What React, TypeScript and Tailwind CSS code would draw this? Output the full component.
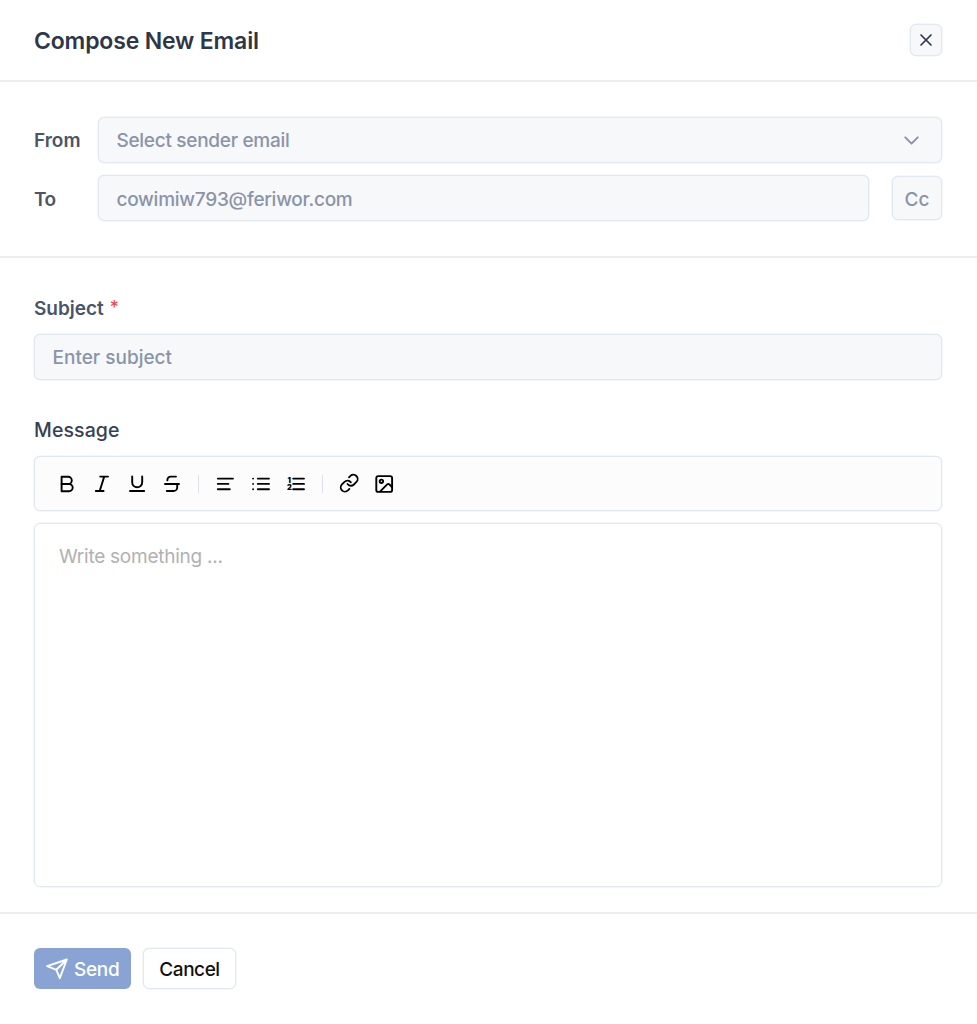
import type { ReactNode } from 'react';
import { ChevronDown, Link, X } from 'lucide-react';

interface ToolProps {
  label: string;
  children: ReactNode;
}

function Tool({ label, children }: ToolProps) {
  return (
    <button type="button" aria-label={label} className="flex h-8 w-[35.2px] shrink-0 items-center justify-center">
      {children}
    </button>
  );
}

function Glyph({ children }: { children: ReactNode }) {
  return (
    <svg width="24" height="24" viewBox="0 0 24 24" fill="none" stroke="currentColor" strokeWidth="1.9" strokeLinecap="round" strokeLinejoin="round">
      {children}
    </svg>
  );
}

function Separator() {
  return <div className="mx-[8.5px] h-[18px] w-px shrink-0 bg-[#dfe2ec]" />;
}

function Toolbar() {
  return (
    <div className="flex h-[55px] items-center rounded-md border border-[#e2e8f0] bg-[#fcfcfc] pl-[14px] text-black shadow-[0_0_0_0.5px_#e9eef4]">
      <Tool label="Bold">
        <Glyph><path d="M6.6 4.8h6.6a3.6 3.6 0 0 1 0 7.2H6.3M6.3 12h7.8a3.6 3.6 0 0 1 0 7.2H6.6V4.8" /></Glyph>
      </Tool>
      <Tool label="Italic">
        <Glyph><path d="M10.2 4.6h7.8M5.8 19h7.8M14.2 4.6 9.7 19" /></Glyph>
      </Tool>
      <Tool label="Underline">
        <Glyph><path d="M7.2 4.4v5.9a5 5 0 0 0 10 0V4.4M5 19h14.2" /></Glyph>
      </Tool>
      <Tool label="Strikethrough">
        <Glyph><path d="M16 4.6h-5.2a3.4 3.4 0 0 0-3.4 3.7M5 12h14M17.2 12.2v3.2a3.6 3.6 0 0 1-3.6 3.6H6.8" /></Glyph>
      </Tool>
      <Separator />
      <Tool label="Align">
        <Glyph><path d="M4.8 6.6h15.2M4.8 11.9h10.6M4.8 17.2h12" /></Glyph>
      </Tool>
      <Tool label="Bullet list">
        <Glyph><path d="M8.8 6.6h11.2M8.8 11.9h11.2M8.8 17.2h11.2M4.1 6.6h.01M4.1 11.9h.01M4.1 17.2h.01" /></Glyph>
      </Tool>
      <Tool label="Numbered list">
        <Glyph>
          <path d="M9.2 6.6h10.8M9.2 11.9h10.8M9.2 17.2h10.8" />
          <text x="3.4" y="11" className="fill-black font-['Inter'] text-[7.5px] font-black" stroke="none">1</text>
          <text x="2.9" y="18.4" className="fill-black font-['Inter'] text-[7.5px] font-black" stroke="none">2</text>
        </Glyph>
      </Tool>
      <Separator />
      <Tool label="Link"><Link size={20.4} strokeWidth={2.1} /></Tool>
      <Tool label="Image">
        <Glyph>
          <rect x="4.3" y="4.1" width="15.8" height="15.8" rx="2" />
          <circle cx="9.4" cy="9.3" r="1.7" />
          <path d="m8 19.6 7.2-7.2a1.6 1.6 0 0 1 2.2 0l2.5 2.6" />
        </Glyph>
      </Tool>
    </div>
  );
}

export default function App() {
  return (
    <div className="flex h-[1024px] w-[977px] flex-col bg-white font-['Inter',sans-serif] text-[19px] leading-6 text-[#4a5568]">
      <header className="flex h-[82px] items-center justify-between border-b-2 border-[#e9eef3] pr-[35px] pl-[34px]">
        <h1 className="pt-[2px] text-[23px] font-semibold tracking-[-0.17px] text-[#2d3748]">Compose New Email</h1>
        <button type="button" aria-label="Close" className="flex size-8 items-center justify-center rounded-md border border-[#e2e8f0] bg-[#f7f8fa] text-[#2d3748] shadow-[0_0_0_0.5px_#e9eef4]">
          <X size={20} strokeWidth={2} />
        </button>
      </header>

      <section className="flex h-[176px] flex-col gap-3 border-b-2 border-[#e9eef3] pt-[35px] pr-[35px] pl-[34px]">
        <div className="flex items-center">
          <label className="w-16 pt-[2px] font-semibold">From</label>
          <div className="flex h-[46px] flex-1 items-center justify-between rounded-md border border-[#e2e8f0] bg-[#f7f8fa] pr-[17px] pl-[17.5px] text-[#8a94a9] shadow-[0_0_0_0.5px_#e9eef4]">
            <span className="pt-[2px] font-[450] tracking-[-0.29px]">Select sender email</span>
            <ChevronDown size={25} strokeWidth={1.9} />
          </div>
        </div>
        <div className="flex items-center">
          <label className="w-16 pt-[3px] font-semibold tracking-[-0.5px]">To</label>
          <div className="flex h-[46px] flex-1 items-center rounded-md border border-[#e2e8f0] bg-[#f7f8fa] pl-[17.5px] text-[#8a94a9] shadow-[0_0_0_0.5px_#e9eef4]">
            <span className="pt-[3px] font-[450] tracking-[-0.26px]">cowimiw793@feriwor.com</span>
          </div>
          <button type="button" className="ml-[23px] h-11 w-[50px] rounded-md border border-[#e2e8f0] bg-[#f7f8fa] pt-[3px] font-[450] text-[#8a94a9] shadow-[0_0_0_0.5px_#e9eef4]">Cc</button>
        </div>
      </section>

      <main className="flex h-[656px] flex-col border-b-2 border-[#e9eef3] pt-[39px] pr-[35px] pl-[34px]">
        <label className="flex h-6 font-semibold">Subject <span className="ml-[6px] -translate-y-px text-[18px] font-normal text-[#f04444]">*</span></label>
        <div className="mt-[13px] flex h-[46px] items-center rounded-md border border-[#e2e8f0] bg-[#f7f8fa] pl-[17.5px] text-[#8a94a9] shadow-[0_0_0_0.5px_#e9eef4]">
          <span className="pt-[2px] font-[450]">Enter subject</span>
        </div>
        <label className="mt-[38px] mb-[14px] text-[19.5px] font-medium tracking-[0.1px] text-[#374151]">Message</label>
        <Toolbar />
        <div className="mt-3 h-[364px] rounded-md border border-[#e2e8f0] pt-[21px] pl-6 tracking-[-0.25px] text-[#b1b1b1] shadow-[0_0_0_0.5px_#e9eef4]">Write something ...</div>
      </main>

      <footer className="flex gap-3 pt-[34px] pl-[34px]">
        <button type="button" className="flex h-[41px] w-[97px] items-center rounded-md bg-[#88a3d4] pl-3 text-white">
          <svg width="22" height="22" viewBox="0 0 22 22" fill="none" stroke="currentColor" strokeWidth="1.9" strokeLinejoin="round">
            <path d="M20.8 1.5 1.2 8.2l9.1 3.6 3.5 8.4zM20.8 1.5 10.3 11.8" />
          </svg>
          <span className="ml-[6px] pt-[2px] font-[450] tracking-[-0.3px]">Send</span>
        </button>
        <button type="button" className="h-[41px] w-[93px] rounded-md border border-[#e2e8f0] bg-white pt-[2px] font-[450] tracking-[-0.45px] text-[#111111] shadow-[0_0_0_0.5px_#e9eef4]">Cancel</button>
      </footer>
    </div>
  );
}
